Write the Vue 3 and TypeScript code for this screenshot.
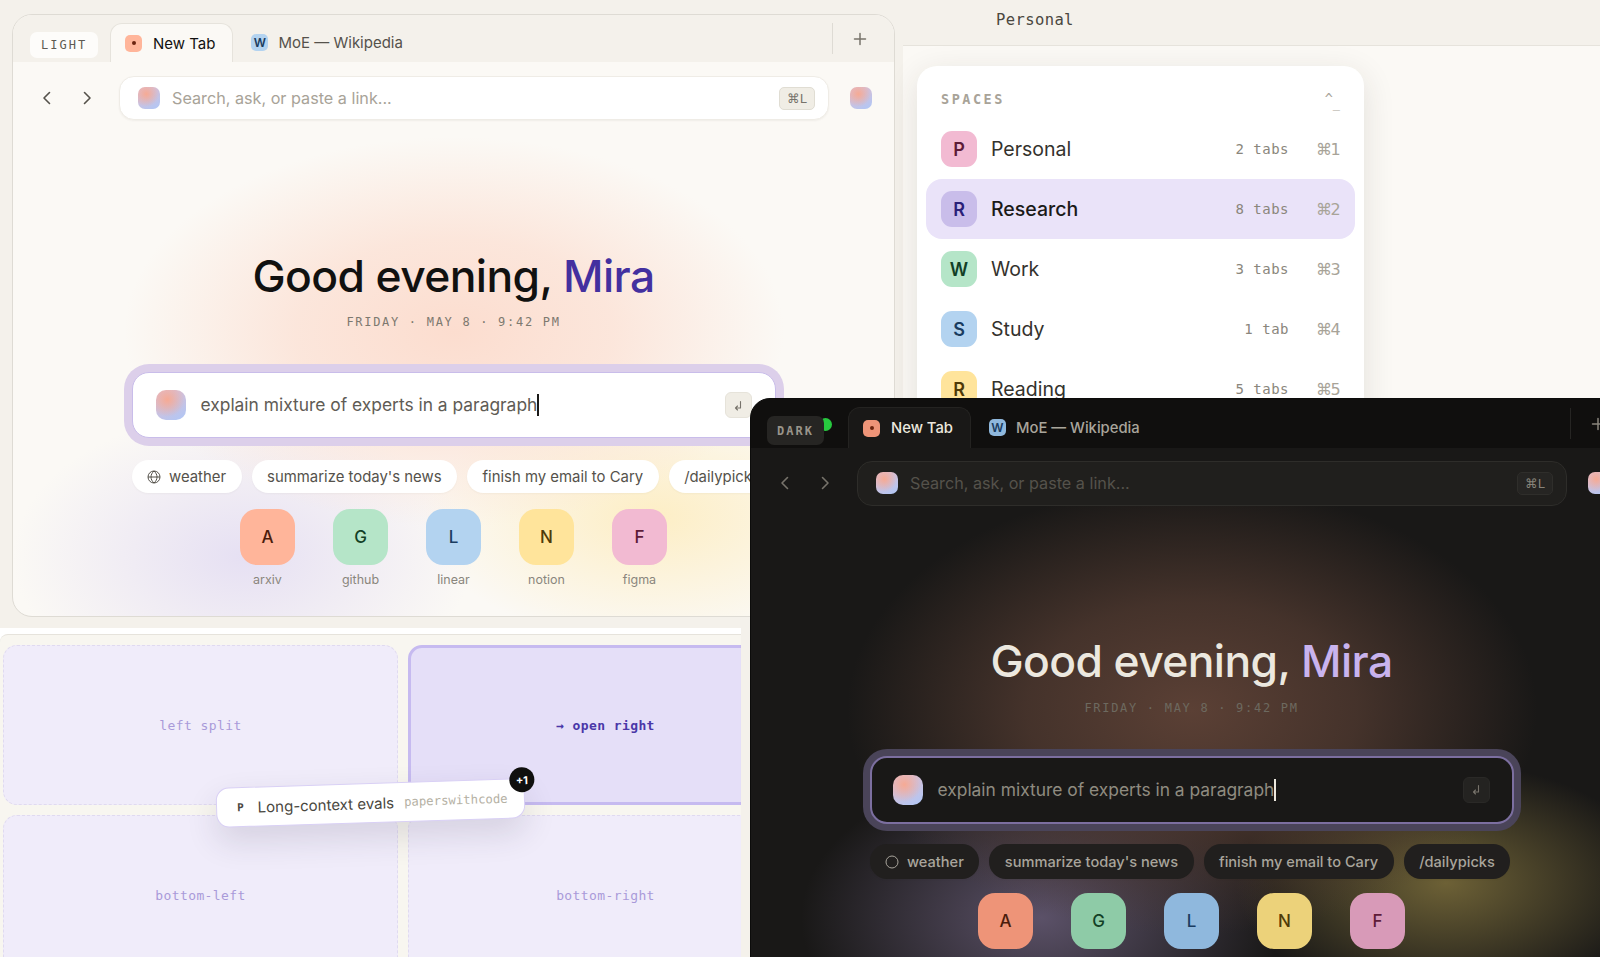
<script setup lang="ts">
interface Shortcut { letter: string; label: string; tone: string }
interface Space { letter: string; name: string; tabs: string; key: string; tone: string; active?: boolean }

const windows = [
  { theme: 'light', badge: 'LIGHT' },
  { theme: 'dark', badge: 'DARK' },
]
const chips = ["summarize today's news", 'finish my email to Cary', '/dailypicks']
const shortcuts: Shortcut[] = [
  { letter: 'A', label: 'arxiv', tone: 'peach' },
  { letter: 'G', label: 'github', tone: 'mint' },
  { letter: 'L', label: 'linear', tone: 'sky' },
  { letter: 'N', label: 'notion', tone: 'butter' },
  { letter: 'F', label: 'figma', tone: 'rose' },
]
const spaces: Space[] = [
  { letter: 'P', name: 'Personal', tabs: '2 tabs', key: '⌘1', tone: 'rose' },
  { letter: 'R', name: 'Research', tabs: '8 tabs', key: '⌘2', tone: 'lilac', active: true },
  { letter: 'W', name: 'Work', tabs: '3 tabs', key: '⌘3', tone: 'mint' },
  { letter: 'S', name: 'Study', tabs: '1 tab', key: '⌘4', tone: 'sky' },
  { letter: 'R', name: 'Reading', tabs: '5 tabs', key: '⌘5', tone: 'butter' },
]
const cells = [
  { label: 'left split', active: false },
  { label: '→ open right', active: true },
  { label: 'bottom-left', active: false },
  { label: 'bottom-right', active: false },
]
</script>

<template>
  <div class="canvas">
    <section class="side">
      <header class="side-top">Personal</header>
      <div class="side-body">
        <div class="card">
          <div class="card-head">
            <span>SPACES</span>
            <span class="card-mark">^<sub>_</sub></span>
          </div>
          <div v-for="s in spaces" :key="s.key" class="space" :class="{ on: s.active }">
            <span class="space-icon" :class="s.tone">{{ s.letter }}</span>
            <span class="space-name">{{ s.name }}</span>
            <span class="space-tabs">{{ s.tabs }}</span>
            <span class="space-key">{{ s.key }}</span>
          </div>
        </div>
      </div>
    </section>

    <section class="split">
      <div class="split-grid">
        <div v-for="c in cells" :key="c.label" class="cell" :class="{ on: c.active }">{{ c.label }}</div>
      </div>
      <div class="drag">
        <span class="drag-p">P</span>
        <span class="drag-title">Long-context evals</span>
        <span class="drag-site">paperswithcode</span>
        <span class="drag-count">+1</span>
      </div>
    </section>

    <section v-for="w in windows" :key="w.theme" class="win" :class="w.theme">
      <div class="tabbar">
        <span class="dot"></span>
        <span class="badge">{{ w.badge }}</span>
        <div class="tab current">
          <span class="fav peach"><i></i></span>
          <span>New Tab</span>
        </div>
        <div class="tab">
          <span class="fav sky">W</span>
          <span>MoE — Wikipedia</span>
        </div>
        <div class="tab-end">
          <svg width="14" height="14" viewBox="0 0 14 14" fill="none" stroke="currentColor" stroke-width="1.5" stroke-linecap="round"><path d="M7 1.5v11M1.5 7h11" /></svg>
        </div>
      </div>

      <div class="body">
        <div class="toolbar">
          <button class="nav" type="button" aria-label="Back">
            <svg width="12" height="14" viewBox="0 0 12 14" fill="none" stroke="currentColor" stroke-width="1.6" stroke-linecap="round" stroke-linejoin="round"><path d="M8.500 1.500 3 7l5.500 5.500" /></svg>
          </button>
          <button class="nav" type="button" aria-label="Forward">
            <svg width="12" height="14" viewBox="0 0 12 14" fill="none" stroke="currentColor" stroke-width="1.6" stroke-linecap="round" stroke-linejoin="round"><path d="M3.500 1.500 9 7l-5.500 5.500" /></svg>
          </button>
          <div class="address">
            <span class="orb small"></span>
            <span class="placeholder">Search, ask, or paste a link...</span>
            <kbd class="kbd">⌘L</kbd>
          </div>
          <span class="orb small tail"></span>
        </div>

        <div class="hero">
          <h1 class="greet">Good evening, <em>Mira</em></h1>
          <p class="date">FRIDAY · MAY 8 · 9:42 PM</p>

          <div class="composer">
            <span class="orb big"></span>
            <span class="query">explain mixture of experts in a paragraph<i class="caret"></i></span>
            <span class="enter">
              <svg width="11" height="11" viewBox="0 0 11 11" fill="none" stroke="currentColor" stroke-width="1.1" stroke-linecap="round" stroke-linejoin="round"><path d="M7.500 1.500v6.500H2.500M4.500 6 2.500 8l2 2" /></svg>
            </span>
          </div>

          <div class="chips">
            <span class="chip">
              <svg class="globe" width="14" height="14" viewBox="0 0 14 14" fill="none" stroke="currentColor" stroke-width="1"><circle cx="7" cy="7" r="6" /><path class="globe-lines" d="M1 7h12M7 1c-4 3.500-4 8.500 0 12M7 1c4 3.500 4 8.500 0 12" /></svg>
              weather
            </span>
            <span v-for="c in chips" :key="c" class="chip">{{ c }}</span>
          </div>

          <div class="tiles">
            <div v-for="t in shortcuts" :key="t.label" class="tile-wrap">
              <span class="tile" :class="t.tone">{{ t.letter }}</span>
              <span class="tile-label">{{ t.label }}</span>
            </div>
          </div>
        </div>
      </div>
    </section>
  </div>
</template>

<style>
html, body { margin: 0; background: #f4f1eb; }
</style>

<style scoped>
.canvas {
  position: relative;
  width: 1600px;
  height: 957px;
  overflow: hidden;
  background: #f4f1eb;
  font-family: Inter, "Noto Sans", sans-serif;
}

/* windows on the canvas */
.win {
  position: absolute;
  width: 883px;
  height: 603px;
  box-sizing: border-box;
  border-radius: 20px;
  overflow: hidden;
  display: flex;
  flex-direction: column;
}
.light {
  left: 12px;
  top: 14px;
  background: #fbf9f5;
  border: 1px solid #dedbd4;
  color: #111110;
}
.dark {
  left: 750px;
  top: 398px;
  background: #191817;
  border: 1px solid #0c0c0b;
  color: #ece8df;
}

.tabbar {
  position: relative;
  flex: none;
  height: 47px;
  display: flex;
  align-items: flex-end;
  padding-left: 97px;
  background: #f4f1eb;
}
.dark .tabbar { background: #100f0e; height: 49px; }

.badge {
  position: absolute;
  left: 17px;
  top: 17px;
  height: 26px;
  padding: 0 11px;
  display: flex;
  align-items: center;
  border-radius: 7px;
  background: #fdfcfa;
  font: 500 12px "DejaVu Sans Mono", monospace;
  letter-spacing: 2px;
  color: #5e5a52;
}
.dark .badge {
  left: 16px;
  height: 29px;
  padding: 0 10px;
  background: #262523;
  color: #99948a;
  font-weight: 700;
}
.dot { display: none; }
.dark .dot {
  display: block;
  position: absolute;
  left: 68px;
  top: 19px;
  width: 13px;
  height: 13px;
  border-radius: 50%;
  background: #27c93f;
}

.tab {
  height: 39px;
  box-sizing: border-box;
  padding: 0 18px;
  display: flex;
  align-items: center;
  gap: 10px;
  font-size: 15px;
  color: #55524b;
}
.dark .tab { height: 41px; color: #a9a59c; font-weight: 500; font-size: 14.8px; }
.tab.current {
  padding-left: 14px;
  padding-right: 17px;
  gap: 11px;
  background: #fbf9f5;
  border: 1px solid #e6e3dc;
  border-bottom: 0;
  border-radius: 12px 12px 0 0;
  color: #111110;
}
.dark .tab.current { background: #191817; border-color: #242321; color: #ece8df; }

.fav {
  width: 17px;
  height: 17px;
  flex: none;
  border-radius: 5px;
  display: grid;
  place-items: center;
  font-size: 12px;
  font-weight: 600;
}
.fav i {
  width: 4px;
  height: 4px;
  border-radius: 50%;
  background: #6b2410;
}
.tab-end {
  margin-left: auto;
  align-self: flex-start;
  margin-top: 8px;
  width: 54px;
  height: 31px;
  box-sizing: border-box;
  margin-right: 8px;
  border-left: 1px solid #dedbd4;
  display: grid;
  place-items: center;
  color: #77736b;
}
.dark .tab-end { border-color: #262523; color: #8a867d; margin-top: 9px; }

.body {
  flex: 1;
  min-height: 0;
  background:
    radial-gradient(ellipse 330px 195px at 441px 270px, #fcddcf 0%, rgba(252, 221, 207, 0.68) 48%, rgba(252, 221, 207, 0) 100%),
    radial-gradient(ellipse 230px 145px at 230px 495px, #e6e0f3 0%, rgba(230, 224, 243, 0) 100%),
    radial-gradient(ellipse 230px 125px at 640px 455px, #fdeec5 0%, rgba(253, 238, 197, 0) 100%);
}
.dark .body {
  background:
    radial-gradient(ellipse 345px 225px at 441px 262px, #5b4035 0%, rgba(91, 64, 53, 0.66) 48%, rgba(91, 64, 53, 0) 100%),
    radial-gradient(ellipse 240px 150px at 290px 470px, #5b5168 0%, rgba(91, 81, 104, 0) 100%),
    radial-gradient(ellipse 210px 120px at 695px 435px, #6d6136 0%, rgba(109, 97, 54, 0) 100%);
}

.toolbar {
  height: 72px;
  box-sizing: border-box;
  padding: 14px 0;
  display: flex;
  align-items: center;
}
.nav {
  width: 40px;
  height: 30px;
  padding: 0;
  border: 0;
  background: none;
  display: grid;
  place-items: center;
  color: #55524b;
}
.nav:first-child { margin-left: 14px; }
.dark .nav { color: #77736b; margin-top: -2px; }
.address {
  margin-left: 12px;
  width: 710px;
  height: 44px;
  box-sizing: border-box;
  padding: 0 13px 0 18px;
  display: flex;
  align-items: center;
  background: #fff;
  border: 1px solid #efece6;
  border-radius: 15px;
  box-shadow: 0 1px 2px rgba(60, 50, 30, 0.06);
}
.dark .address {
  height: 45px;
  margin-top: -2px;
  background: #201f1d;
  border: 1.5px solid #2e2d2a;
  box-shadow: none;
}
.placeholder { margin-left: 12px; flex: 1; font-size: 16.2px; color: #a8a398; }
.dark .placeholder { color: #55524b; }
.kbd {
  height: 23px;
  width: 36px;
  box-sizing: border-box;
  display: grid;
  place-items: center;
  border: 1px solid #e0ddd3;
  border-radius: 5px;
  background: #f0ede5;
  color: #77736b;
  font: 12.5px "DejaVu Sans", sans-serif;
}
.dark .kbd { background: #262523; border-color: #2f2e2b; color: #88847a; }

.orb {
  flex: none;
  display: block;
  background:
    radial-gradient(circle at 38% 32%, #f6aa94 0%, rgba(246, 170, 148, 0) 62%),
    linear-gradient(150deg, #e5bcc9 0%, #b4c6f3 90%);
}
.orb.small { width: 22px; height: 22px; border-radius: 7px; }
.orb.tail { margin-left: 21px; }
.dark .orb.tail { margin-top: -2px; }
.orb.big { width: 30px; height: 30px; border-radius: 10px; }

.hero {
  padding-top: 114px;
  display: flex;
  flex-direction: column;
  align-items: center;
}
.dark .hero { padding-top: 113px; }
.greet {
  margin: 0;
  font-size: 44.4px;
  line-height: 56px;
  font-weight: 500;
  letter-spacing: -0.6px;
  white-space: nowrap;
}
.greet em { font-style: normal; color: #43309f; }
.dark .greet em { color: #c9b3ee; }
.date {
  margin: 10px 0 0;
  font: 12px/16px "DejaVu Sans Mono", monospace;
  letter-spacing: 1.7px;
  color: #7d796f;
}
.dark .date { margin-top: 11px; color: #6d695f; }

.composer {
  margin-top: 42px;
  width: 644px;
  height: 66px;
  box-sizing: border-box;
  padding: 0 23px;
  display: flex;
  align-items: center;
  background: #fff;
  border: 1px solid #c9bdea;
  border-radius: 17px;
  box-shadow: 0 0 0 8px #dccfea;
}
.dark .composer {
  margin-top: 40px;
  height: 68px;
  padding: 0 22px 1px 21px;
  background: #191817;
  border: 2px solid #7c6fa0;
  box-shadow: 0 0 0 7px #4a4459;
}
.query {
  margin-left: 15px;
  flex: 1;
  font-size: 17.4px;
  color: #5f5c55;
  white-space: nowrap;
}
.dark .query { color: #8f8b80; }
.caret {
  display: inline-block;
  width: 1.5px;
  height: 22px;
  vertical-align: -5px;
  background: #1b1a18;
}
.dark .caret { background: #ece8df; }
.enter {
  width: 27px;
  height: 26px;
  display: grid;
  place-items: center;
  background: #f0ede5;
  border: 1px solid #e6e3da;
  border-radius: 6px;
  box-sizing: border-box;
  color: #77736b;
}
.dark .enter { background: #242321; border-color: #2a2927; color: #77736b; }

.chips {
  margin-top: 22px;
  width: 644px;
  display: flex;
  gap: 10px;
  white-space: nowrap;
}
.dark .chips { margin-top: 20px; }
.chip {
  height: 33px;
  box-sizing: border-box;
  padding: 0 15.5px;
  display: flex;
  align-items: center;
  gap: 8px;
  border-radius: 17px;
  background: #fff;
  font-size: 14.9px;
  color: #55524b;
  box-shadow: 0 1px 2px rgba(60, 50, 30, 0.04);
}
.dark .chip { height: 35px; background: #211f1e; color: #a9a59c; font-weight: 500; font-size: 14.6px; }
.dark .globe-lines { display: none; }

.tiles { margin-top: 16px; display: flex; gap: 38px; }
.dark .tiles { margin-top: 14px; }
.tile-wrap { display: flex; flex-direction: column; align-items: center; gap: 7px; width: 55px; }
.tile {
  width: 55px;
  height: 56px;
  border-radius: 17px;
  display: grid;
  place-items: center;
  font-size: 17px;
  font-weight: 500;
}
.tile-label { font-size: 12.5px; line-height: 16px; color: #8a867d; }

.peach { background: #ffb59a; color: #4a1c0c; }
.mint { background: #b5e5c8; color: #123f26; }
.sky { background: #b3d3f0; color: #1a3c60; }
.butter { background: #ffe49b; color: #4f3a08; }
.rose { background: #f2bad2; color: #5e1c38; }
.lilac { background: #c9bdea; color: #2a2078; }
.dark .peach { background: #ee9478; }
.dark .mint { background: #8ecba7; }
.dark .sky { background: #8fb8dd; }
.dark .butter { background: #ecd27a; }
.dark .rose { background: #d89ab8; }

/* right panel */
.side {
  position: absolute;
  left: 903px;
  top: 0;
  right: 0;
  bottom: 0;
  display: flex;
  flex-direction: column;
}
.side-top {
  flex: none;
  height: 46px;
  box-sizing: border-box;
  padding: 10px 0 0 93px;
  background: #f4f1eb;
  border-bottom: 1px solid #e6e3dc;
  font: 15.5px/20px "DejaVu Sans Mono", monospace;
  letter-spacing: .4px;
  color: #4a4740;
}
.side-body { flex: 1; padding: 20px 0 0 14px; background: #fbf9f5; }
.card {
  width: 447px;
  height: 360px;
  box-sizing: border-box;
  padding: 0 9px;
  background: #fff;
  border-radius: 20px;
  box-shadow: 0 8px 32px rgba(50, 45, 30, 0.12);
}
.card-head {
  height: 53px;
  box-sizing: border-box;
  padding: 12px 15px 0;
  display: flex;
  align-items: center;
  justify-content: space-between;
  font: 600 13.5px "DejaVu Sans Mono", monospace;
  letter-spacing: 2.5px;
  color: #a8a398;
}
.card-mark { font-weight: 400; letter-spacing: 0; }
.card-mark sub { font-size: 12px; line-height: 0; }
.space {
  height: 60px;
  box-sizing: border-box;
  padding: 0 15px;
  display: grid;
  grid-template-columns: 36px 1fr auto 24px;
  align-items: center;
  border-radius: 16px;
}
.space.on { background: #eae3f9; }
.space-icon {
  width: 36px;
  height: 36px;
  border-radius: 11px;
  display: grid;
  place-items: center;
  font-size: 18px;
  font-weight: 600;
}
.space-name { margin-left: 14px; font-size: 19.5px; color: #34322d; }
.space.on .space-name { color: #1b1a18; font-weight: 500; }
.space-tabs {
  margin-right: 27px;
  font: 14px "DejaVu Sans Mono", monospace;
  letter-spacing: .5px;
  color: #8a867c;
}
.space-key {
  font: 16px "DejaVu Sans", sans-serif;
  letter-spacing: -1.4px;
  color: #a8a398;
  white-space: nowrap;
}

/* tile-split preview */
.split {
  position: absolute;
  left: 0;
  top: 628px;
  width: 741px;
  bottom: 0;
  background: #fff;
  overflow: hidden;
}
.split-grid {
  margin-top: 6px;
  height: 100%;
  box-sizing: border-box;
  padding: 10px 0 0 3px;
  background: #f8f6f0;
  border-top: 1px solid #e6e3dc;
  border-radius: 8px 0 0 0;
  display: grid;
  grid-template-columns: 395px 395px;
  grid-template-rows: 160px 160px;
  gap: 10px;
}
.cell {
  box-sizing: border-box;
  display: grid;
  place-items: center;
  background: #f0ecfa;
  border: 1px dashed #e0daf0;
  border-radius: 14px;
  font: 13px "DejaVu Sans Mono", monospace;
  letter-spacing: .4px;
  color: #a99ad9;
}
.cell.on {
  background: #e5dff8;
  border: 3px solid #c6baf0;
  color: #4a37a8;
  font-weight: 700;
}
.drag {
  position: absolute;
  left: 216px;
  top: 155px;
  width: 309px;
  height: 40px;
  box-sizing: border-box;
  padding: 0 15px 0 20px;
  display: flex;
  align-items: center;
  transform: rotate(-1.8deg);
  background: #fff;
  border: 1px solid #d9d0f5;
  border-radius: 13px;
  box-shadow: 0 14px 32px rgba(50, 45, 70, 0.14);
  white-space: nowrap;
}
.drag-p { font: 700 11px "DejaVu Sans Mono", monospace; color: #4a4740; }
.drag-title { margin-left: 14px; font-size: 15px; color: #4a4740; }
.drag-site { margin-left: 10px; font: 12.3px "DejaVu Sans Mono", monospace; color: #b5b1a4; }
.drag-count {
  position: absolute;
  right: -11px;
  top: -12px;
  width: 25px;
  height: 25px;
  border-radius: 50%;
  background: #0f0f0e;
  color: #fff;
  display: grid;
  place-items: center;
  font-size: 11px;
  font-weight: 700;
}
</style>
